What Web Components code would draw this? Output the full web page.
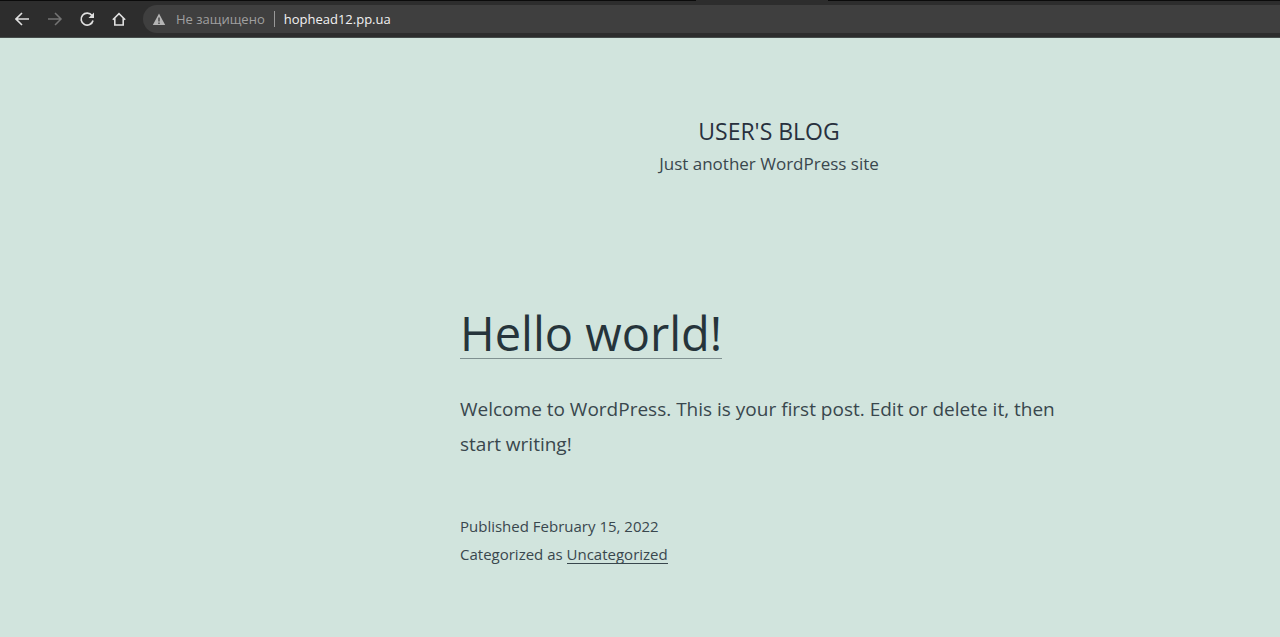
<!DOCTYPE html>
<html lang="en">
<head>
<meta charset="utf-8">
<meta name="viewport" content="width=device-width, initial-scale=1">
<title>User's Blog</title>
<style>
  body { margin: 0; min-height: 100vh; background: #d1e4dd; color: #39474d; font-family: "Segoe UI", "Open Sans", "Noto Sans", sans-serif; }
</style>
</head>
<body>
<browser-bar address="hophead12.pp.ua"></browser-bar>
<blog-page>
  <blog-header slot="header">
    <span slot="title">User's Blog</span>
    <span slot="tagline">Just another WordPress site</span>
  </blog-header>
  <blog-post>
    <span slot="title">Hello world!</span>
    <span slot="content">Welcome to WordPress. This is your first post. Edit or delete it, then start writing!</span>
    <time slot="date" datetime="2022-02-15">February 15, 2022</time>
    <span slot="category">Uncategorized</span>
  </blog-post>
</blog-page>
<script>
class BaseElement extends HTMLElement {
  constructor() {
    super();
    this.attachShadow({ mode: "open" }).innerHTML = this.constructor.markup;
  }
}

class BrowserBar extends BaseElement {
  static markup = `
    <style>
      :host { display: block; box-sizing: border-box; background: #2d2d2d; border-top: 1px solid #0b0b0b; border-bottom: 1px solid #454c4a; position: relative; }
      :host::before { content: ""; position: absolute; top: -1px; left: 696px; width: 132px; height: 1px; background: #2d2d2d; }
      nav { display: flex; align-items: center; gap: 16px; padding: 4px 0 4px 15px; }
      button { display: block; width: 16px; height: 16px; padding: 0; border: 0; background: none; color: #e0e0e0; }
      button:disabled { color: #747474; }
      svg { display: block; width: 16px; height: 16px; }
      .field { flex: 1; display: flex; align-items: center; height: 28px; box-sizing: border-box; padding-left: 8px; gap: 9px; border-radius: 14px 0 0 14px; background: #3f3f3f; color: #a0a0a0; font-size: 13px; line-height: 20px; }
      .bar { width: 1px; height: 16px; background: #989898; }
      input { flex: 1; min-width: 0; padding: 0; border: 0; outline: 0; background: none; color: #f2f2f2; font: inherit; }
    </style>
    <nav aria-label="Browser">
      <button aria-label="Back"><svg viewBox="0 0 16 16" fill="none" stroke="currentColor" stroke-width="1.6"><path d="M14 8H1.500M7 2L1 8l6 6"/></svg></button>
      <button aria-label="Forward" disabled><svg viewBox="0 0 16 16" fill="none" stroke="currentColor" stroke-width="1.500"><path d="M1 8h12.500M8 2l6 6-6 6"/></svg></button>
      <button aria-label="Reload"><svg viewBox="0 0 16 16" fill="none" stroke="currentColor" stroke-width="1.700"><path d="M13 4.600A6 6 0 1 0 14 9.500"/><path d="M15 1.500V7H9.500z" fill="currentColor" stroke="none"/></svg></button>
      <button aria-label="Home"><svg viewBox="0 0 16 16" fill="none" stroke="currentColor" stroke-width="1.600"><path d="M1.800 8.700L8 2.600l6.200 6.100M3.800 7.200v6.800h8.400V7.200"/></svg></button>
      <div class="field">
        <svg viewBox="0 0 16 16" aria-hidden="true"><path fill="#b4b4b4" fill-rule="evenodd" d="M8 2.500L14.200 14H1.800zM7.300 6.500v4h1.400v-4zM7.300 11.500v1.400h1.400v-1.400z"/></svg>
        <label for="address">Не защищено</label>
        <span class="bar"></span>
        <input id="address" type="text" spellcheck="false">
      </div>
    </nav>`;
  connectedCallback() {
    this.shadowRoot.querySelector("input").value = this.getAttribute("address");
  }
}

class BlogPage extends BaseElement {
  static markup = `
    <style>
      :host { display: block; padding: 75px 24px 68px clamp(24px, 36vw, 460px); }
      .column { display: grid; gap: 122px; max-width: 618px; }
    </style>
    <div class="column"><slot name="header"></slot><main><slot></slot></main></div>`;
}

class BlogHeader extends BaseElement {
  static markup = `
    <style>
      :host { display: block; text-align: center; }
      h1 { margin: 0; font-size: 23px; line-height: 36px; font-weight: 400; text-transform: uppercase; color: #28303d; }
      p { margin: 0; font-size: 17px; line-height: 30px; }
    </style>
    <header><h1><slot name="title"></slot></h1><p><slot name="tagline"></slot></p></header>`;
}

class BlogPost extends BaseElement {
  static markup = `
    <style>
      :host { display: block; }
      h2 { margin: 0 0 27px; font-size: 47px; line-height: 64px; font-weight: 400; }
      a { color: inherit; text-decoration: none; border-bottom: 1px solid currentColor; }
      h2 a { display: inline-block; line-height: 50px; color: #26343b; border-color: #7f9090; }
      p { margin: 0; font-size: 19px; line-height: 35px; }
      footer { margin-top: 50px; font-size: 15px; line-height: 28px; }
      footer a { display: inline-block; line-height: 18px; }
    </style>
    <article>
      <h2><a href="#post"><slot name="title"></slot></a></h2>
      <p><slot name="content"></slot></p>
      <footer>
        <div>Published <slot name="date"></slot></div>
        <div>Categorized as <a href="#category"><slot name="category"></slot></a></div>
      </footer>
    </article>`;
}

customElements.define("browser-bar", BrowserBar);
customElements.define("blog-page", BlogPage);
customElements.define("blog-header", BlogHeader);
customElements.define("blog-post", BlogPost);
</script>
</body>
</html>
